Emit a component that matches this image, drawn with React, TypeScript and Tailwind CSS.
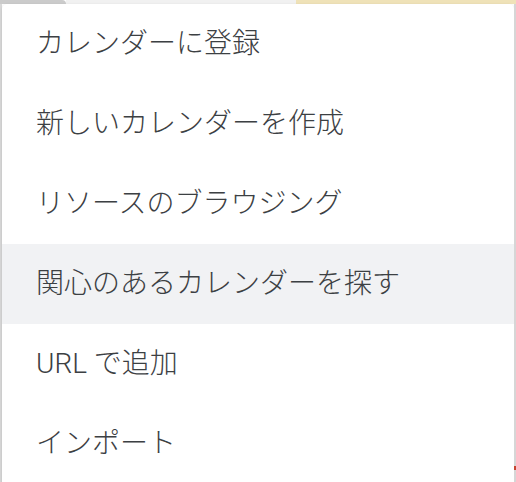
const items = [
  'カレンダーに登録',
  '新しいカレンダーを作成',
  'リソースのブラウジング',
  '関心のあるカレンダーを探す',
  'URL で追加',
  'インポート',
];

export default function App() {
  return (
    <div className="w-[516px] h-[482px] overflow-hidden flex flex-col bg-white">
      {/* 背景の上端 */}
      <div className="flex h-[4px] shrink-0">
        <div className="w-[66px] bg-[#cbcbcb] rounded-tr-[6px]" />
        <div className="w-[230px] bg-[#f1f1f1]" />
        <div className="flex-1 bg-[#efe2b8]" />
      </div>
      <div className="flex flex-1">
        <div className="w-[2px] bg-[#d9d9d9]" />
        <div className="flex-1 bg-white rounded-t-[5px] shadow-[0_1px_3px_rgba(0,0,0,0.15)] flex flex-col">
          {items.map((label, i) => (
            <div
              key={label}
              className={`h-[80px] shrink-0 flex items-center pl-[34px] text-[28px] font-light text-[#3c4043] font-['Roboto','Noto_Sans_CJK_JP',sans-serif] ${
                i === 3 ? 'bg-[#f1f2f4]' : ''
              }`}
            >
              {label}
            </div>
          ))}
        </div>
        <div className="w-[2px] bg-[#d6d6d6] flex flex-col">
          <div className="h-[462px]" />
          <div className="h-[4px] bg-[#c5432f]" />
        </div>
      </div>
    </div>
  );
}
